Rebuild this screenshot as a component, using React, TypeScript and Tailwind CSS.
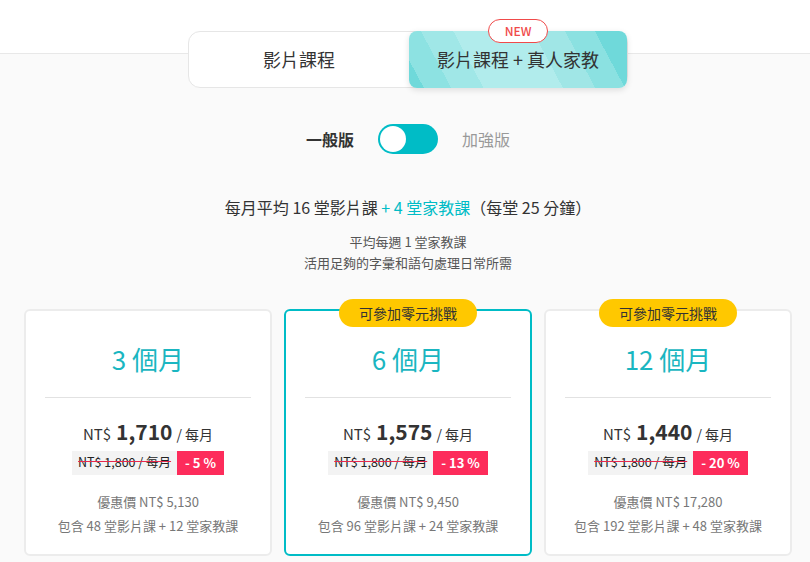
const plans = [
  { months: '3 個月', price: '1,710', off: '- 5 %', total: '5,130', video: 48, tutor: 12, badge: false, active: false },
  { months: '6 個月', price: '1,575', off: '- 13 %', total: '9,450', video: 96, tutor: 24, badge: true, active: true },
  { months: '12 個月', price: '1,440', off: '- 20 %', total: '17,280', video: 192, tutor: 48, badge: true, active: false },
]

function PlanCard({ plan }: { plan: (typeof plans)[number] }) {
  return (
    <div
      className={`relative flex flex-col items-center rounded-md bg-white pb-[18px] pt-[30px] border-2 ${
        plan.active ? 'border-[#00bcc6]' : 'border-[#ececec]'
      }`}
    >
      {plan.badge && (
        <div className="absolute left-1/2 top-[-12px] flex h-[28px] w-[138px] -translate-x-1/2 items-center justify-center rounded-full bg-[#ffc800] text-[14px] text-[#333]">
          可參加零元挑戰
        </div>
      )}
      <h3 className="text-[26px] leading-[36px] text-[#1ab6c1]">{plan.months}</h3>
      <div className="mt-[20px] h-px w-[206px] bg-[#e2e2e2]" />
      <div className="mt-[18px] flex items-baseline text-[#333]">
        <span className="text-[15px]">NT$</span>
        <span className="ml-[5px] text-[21px] font-semibold">{plan.price}</span>
        <span className="ml-[4px] text-[14px]">/ 每月</span>
      </div>
      <div className="mt-[3px] flex h-[24px] items-stretch text-[12.5px]">
        <span className="flex items-center bg-[#f3f3f3] px-[6px] text-[#222] line-through decoration-[#e8294f]">
          NT$ 1,800 / 每月
        </span>
        <span className="flex items-center bg-[#fd2c5b] px-[8px] text-[13px] font-bold text-white">{plan.off}</span>
      </div>
      <p className="mt-[17px] text-[13px] leading-[20px] text-[#777]">優惠價 NT$ {plan.total}</p>
      <p className="mt-[4px] text-[13px] leading-[20px] text-[#777]">
        包含 {plan.video} 堂影片課 + {plan.tutor} 堂家教課
      </p>
    </div>
  )
}

export default function App() {
  return (
    <div
      className="min-h-[562px] w-[816px] overflow-hidden bg-[#fafafa]"
      style={{ fontFamily: '"Noto Sans CJK TC", "Noto Sans", sans-serif' }}
    >
      <div className="h-[54px] border-b border-[#e8e8e8] bg-white" />

      <div className="-mt-[23px] flex justify-center">
        <div className="flex h-[57px] w-[440px] rounded-xl border border-[#e6e6e6] bg-white">
          <button className="flex w-[220px] items-center justify-center text-[18px] text-[#333]">影片課程</button>
          <button className="relative -my-px flex flex-1 items-center justify-center rounded-lg bg-[linear-gradient(62deg,#6fd9da_0%,#6fd9da_6%,#8de2e2_6%,#8de2e2_17%,#a0e7e7_17%,#a0e7e7_30%,#b1ecec_30%,#b1ecec_62%,#a0e6e6_62%,#a0e6e6_75%,#8be1e1_75%,#8be1e1_87%,#6fd9da_87%)] text-[18px] text-[#333] shadow-[0_2px_6px_rgba(0,0,0,0.12)]">
            <span className="absolute left-1/2 top-[-12px] flex h-[24px] w-[60px] -translate-x-1/2 items-center justify-center rounded-full border-[1.5px] border-[#f04a4a] bg-white text-[12px] font-medium text-[#f04a4a]">
              NEW
            </span>
            影片課程 + 真人家教
          </button>
        </div>
      </div>

      <div className="mt-[36px] flex items-center justify-center gap-[24px]">
        <span className="text-[16px] font-bold text-[#333]">一般版</span>
        <div className="flex h-[30px] w-[60px] items-center rounded-full bg-[#00bcc6] px-[2px]">
          <div className="h-[26px] w-[26px] rounded-full bg-white" />
        </div>
        <span className="text-[16px] text-[#999]">加強版</span>
      </div>

      <div className="mt-[41px] text-center">
        <p className="text-[16px] leading-[24px] text-[#333]">
          每月平均 16 堂影片課 <span className="text-[#00bcc6]">+ 4 堂家教課</span>（每堂 25 分鐘）
        </p>
        <p className="mt-[12px] text-[13px] leading-[21px] text-[#555]">平均每週 1 堂家教課</p>
        <p className="text-[13px] leading-[21px] text-[#555]">活用足夠的字彙和語句處理日常所需</p>
      </div>

      <div className="mx-[24px] mt-[36px] grid grid-cols-3 gap-[12px]">
        {plans.map((p) => (
          <PlanCard key={p.months} plan={p} />
        ))}
      </div>
    </div>
  )
}
